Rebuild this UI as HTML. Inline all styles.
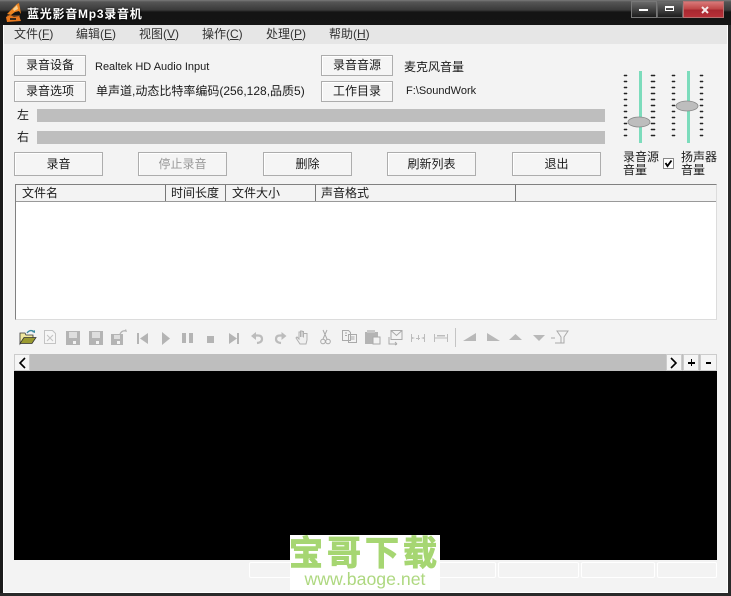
<!DOCTYPE html>
<html><head><meta charset="utf-8">
<style>
html,body{margin:0;padding:0;background:#f3f3f3}
#w{position:relative;width:731px;height:596px;overflow:hidden;background:#f3f3f3;font:12px/14px "Liberation Sans","WenQuanYi Zen Hei","Noto Sans CJK SC",sans-serif;color:#1a1a1a}
#w div{position:absolute;white-space:nowrap}
.b{box-sizing:border-box;background:#f5f5f5;border:1px solid #adadad;text-align:center;box-shadow:inset 1px 1px 0 #fff}
.t{line-height:14px}
.m{top:27px;color:#333}
u{text-decoration:underline}
.h{top:186px;height:15px;line-height:15px}
.g{box-sizing:border-box;top:562px;height:16px;border:1px solid #fff;border-radius:2px}
</style></head><body><div id="w">
<div style="left:0;top:0;width:731px;height:25px;background:linear-gradient(#7a7a7a 0,#555 2px,#3a3a3a 10px,#141414 12px,#151515 25px)"></div>
<div style="left:0;top:25px;width:3px;height:571px;background:#1c1c1c"></div>
<div style="left:3px;top:25px;width:1px;height:567px;background:#fff"></div>
<div style="left:728px;top:25px;width:3px;height:571px;background:#2a2a2a"></div>
<div style="left:727px;top:25px;width:1px;height:567px;background:#fff"></div>
<div style="left:0;top:593px;width:731px;height:3px;background:#2a2a2a"></div>
<div style="left:3px;top:592px;width:725px;height:1px;background:#fff"></div>
<svg style="position:absolute;left:4px;top:2px" width="19" height="21" viewBox="0 0 19 21"><path d="M3 12L9 6L13 2L15 1L16 6L17 12L15 9L11 10L7 13Z" fill="#ee8420"/><path d="M9 7L13 3L14 7L10 9Z" fill="#f8d090"/><path d="M3 13h13v6H3Z" fill="#5a3a20"/><path d="M2 15L6 13L10 15L15 14L17 19L3 20Z" fill="#e8781e"/><path d="M6 16h6v2H6Z" fill="#3a2a1a"/></svg>
<div class="t" style="left:27px;top:7px;color:#fff;font-weight:bold;font-size:12px;letter-spacing:.75px;font-family:'Liberation Sans','Noto Sans CJK SC',sans-serif;text-shadow:0 0 2px #000">蓝光影音Mp3录音机</div>
<div style="left:631px;top:1px;width:26px;height:17px;box-sizing:border-box;border:1px solid #777;background:linear-gradient(#6a6a6a,#444 50%,#1c1c1c)"></div>
<div style="left:639px;top:9px;width:9px;height:2px;background:#fff"></div>
<div style="left:657px;top:1px;width:26px;height:17px;box-sizing:border-box;border:1px solid #666;background:linear-gradient(#6a6a6a,#444 50%,#1c1c1c)"></div>
<div style="left:665px;top:6px;width:7px;height:2px;border:1px solid #fff;border-width:2px 1px 1px"></div>
<div style="left:683px;top:1px;width:41px;height:17px;box-sizing:border-box;border:1px solid #b87070;background:linear-gradient(#d87878,#c04848 45%,#a82830 55%,#b83038)"></div>
<svg style="position:absolute;left:699px;top:5px" width="12" height="11" viewBox="0 0 12 11"><path d="M3 2L9 8M9 2L3 8" stroke="#f4e8e8" stroke-width="2"/></svg>
<div style="left:4px;top:25px;width:723px;height:19px;background:#e6e6e6"></div>
<div class="t m" style="left:14px">文件(<u>F</u>)</div>
<div class="t m" style="left:76px">编辑(<u>E</u>)</div>
<div class="t m" style="left:139px">视图(<u>V</u>)</div>
<div class="t m" style="left:202px">操作(<u>C</u>)</div>
<div class="t m" style="left:266px">处理(<u>P</u>)</div>
<div class="t m" style="left:329px">帮助(<u>H</u>)</div>
<div class="b" style="left:14px;top:55px;width:72px;height:21px;line-height:18px">录音设备</div>
<div class="b" style="left:14px;top:81px;width:72px;height:21px;line-height:18px">录音选项</div>
<div class="b" style="left:321px;top:55px;width:72px;height:21px;line-height:18px">录音音源</div>
<div class="b" style="left:321px;top:81px;width:72px;height:21px;line-height:18px">工作目录</div>
<div class="t" style="left:95px;top:60px;font-size:11px">Realtek HD Audio Input</div>
<div class="t" style="left:96px;top:84px">单声道,动态比特率编码(256,128,品质5)</div>
<div class="t" style="left:404px;top:60px">麦克风音量</div>
<div class="t" style="left:406px;top:84px;font-size:11px">F:\SoundWork</div>
<div class="t" style="left:17px;top:108px">左</div>
<div class="t" style="left:17px;top:130px">右</div>
<div style="left:37px;top:109px;width:568px;height:13px;background:#bebebe"></div>
<div style="left:37px;top:131px;width:568px;height:13px;background:#bebebe"></div>
<div class="b" style="left:14px;top:152px;width:89px;height:24px;line-height:22px">录音</div>
<div class="b" style="left:138px;top:152px;width:89px;height:24px;line-height:22px;color:#999">停止录音</div>
<div class="b" style="left:263px;top:152px;width:89px;height:24px;line-height:22px">删除</div>
<div class="b" style="left:387px;top:152px;width:89px;height:24px;line-height:22px">刷新列表</div>
<div class="b" style="left:512px;top:152px;width:89px;height:24px;line-height:22px">退出</div>
<div style="left:15px;top:184px;width:702px;height:136px;box-sizing:border-box;background:#fff;border:1px solid #808080;border-right-color:#dcdcdc;border-bottom-color:#dcdcdc"></div>
<div style="left:16px;top:185px;width:700px;height:16px;background:#f3f3f3;border-bottom:1px solid #999"></div>
<div class="h" style="left:22px">文件名</div>
<div class="h" style="left:171px">时间长度</div>
<div class="h" style="left:232px">文件大小</div>
<div class="h" style="left:321px">声音格式</div>
<div style="left:165px;top:185px;width:1px;height:16px;background:#777"></div>
<div style="left:225px;top:185px;width:1px;height:16px;background:#777"></div>
<div style="left:315px;top:185px;width:1px;height:16px;background:#777"></div>
<div style="left:515px;top:185px;width:1px;height:16px;background:#777"></div>
<!-- sliders -->
<div style="left:639px;top:71px;width:3px;height:72px;background:#7cdcbc"></div>
<div style="left:687px;top:71px;width:3px;height:72px;background:#7cdcbc"></div>
<svg style="position:absolute;left:620px;top:70px" width="90" height="72" viewBox="0 0 90 72">
<g fill="#222" stroke="#222" stroke-width=".5"><path d="M4 5h3v1H4zM4 11h3v1H4zM4 17h3v1H4zM4 23h3v1H4zM4 29h3v1H4zM4 35h3v1H4zM4 41h3v1H4zM4 47h3v1H4zM4 53h3v1H4zM4 59h3v1H4zM4 65h3v1H4z"/><path d="M31 5h4v1h-4zM31 11h4v1h-4zM31 17h4v1h-4zM31 23h4v1h-4zM31 29h4v1h-4zM31 35h4v1h-4zM31 41h4v1h-4zM31 47h4v1h-4zM31 53h4v1h-4zM31 59h4v1h-4zM31 65h4v1h-4z"/><path d="M52 5h3v1h-3zM52 11h3v1h-3zM52 17h3v1h-3zM52 23h3v1h-3zM52 29h3v1h-3zM52 35h3v1h-3zM52 41h3v1h-3zM52 47h3v1h-3zM52 53h3v1h-3zM52 59h3v1h-3zM52 65h3v1h-3z"/><path d="M80 5h3v1h-3zM80 11h3v1h-3zM80 17h3v1h-3zM80 23h3v1h-3zM80 29h3v1h-3zM80 35h3v1h-3zM80 41h3v1h-3zM80 47h3v1h-3zM80 53h3v1h-3zM80 59h3v1h-3zM80 65h3v1h-3z"/></g>
<ellipse cx="19" cy="52" rx="11" ry="5" fill="#bdbdbd" stroke="#888" stroke-width=".8"/><ellipse cx="67" cy="36" rx="11" ry="5" fill="#bdbdbd" stroke="#888" stroke-width=".8"/></svg>
<div class="t" style="left:623px;top:151px;line-height:13px">录音源<br>音量</div>
<div class="t" style="left:681px;top:151px;line-height:13px">扬声器<br>音量</div>
<div style="left:663px;top:158px;width:11px;height:11px;box-sizing:border-box;border:1px solid #888;background:#fff"></div>
<svg style="position:absolute;left:664px;top:159px" width="9" height="9" viewBox="0 0 9 9"><path d="M1.500 4L3.500 7L7.500 1.500" stroke="#000" stroke-width="1.800" fill="none"/></svg>
<!-- toolbar -->
<svg style="position:absolute;left:18px;top:328px" width="560" height="20" viewBox="0 0 560 20">
<path d="M2 5h5l1 2h7v3H6l-4 6Z" fill="#f0e8a0" stroke="#333" stroke-width=".8"/><path d="M2 15.500l4-6h12l-4 6Z" fill="#9a9a30" stroke="#333" stroke-width=".8"/><path d="M9 5q3-4 7-1.500" stroke="#3a8aa0" stroke-width="1.300" fill="none"/><path d="M17 5l-3-1l3-2Z" fill="#3a8aa0"/>
<g fill="none" stroke="#c4c4c4"><path d="M26.500 2.500h8l3 3v10h-11Z" fill="#f6f6f6"/><path d="M29 7l6 6M35 7l-6 6"/></g>
<g fill="#b4b4b4"><path d="M48 3h14v14H48Z"/><path d="M71 3h14v14H71Z"/><path d="M93 6h12v11H93Z"/></g>
<g fill="#dedede"><path d="M51 4h8v6h-8zM74 4h8v6h-8zM96 7h6v4h-6z"/></g>
<g fill="#f3f3f3"><path d="M55 13h3v3h-3zM78 13h3v3h-3zM99 13h3v3h-3z"/></g>
<path d="M102 6q2-4 6-3" stroke="#b4b4b4" fill="none" stroke-width="1.300"/><path d="M109 4l-3-1l2-2Z" fill="#b4b4b4"/>
<g fill="#b4b4b4"><path d="M119 5h2v11h-2zM130 5v11l-8-5.500Z"/><path d="M144 4l8 6.500l-8 6.500Z"/><path d="M164 5h4v10h-4zM171 5h4v10h-4z"/><path d="M189 8h7v7h-7z"/><path d="M211 5l8 5.500l-8 5.500ZM219 5h2v11h-2z"/></g>
<g fill="none" stroke="#bcbcbc" stroke-width="2.200"><path d="M236 7.500h4q4 0 4 3.500t-5 4"/><path d="M266 7.500h-4q-4 0-4 3.500t5 4"/></g><path d="M233 8l5-4v8ZM268.500 8l-5-4v8Z" fill="#bcbcbc"/>
<path d="M282 16l-4-6l1-1l2 2V4h1.500v5V3h1.500v6V3.500h1.500v6V5.500H289V12l-1 4Z" fill="#f0f0f0" stroke="#b0b0b0"/>
<g fill="none" stroke="#aaa"><path d="M305 2l4 9M309 2l-4 9"/><circle cx="305" cy="13.500" r="2.300"/><circle cx="310" cy="13.500" r="2.300"/><path d="M324.500 2.500h6l2 2v8h-8ZM330.500 6.500h8v8h-8Z" fill="#f3f3f3"/><path d="M332.500 9h4M332.500 11h4M327 5h2M327 7.500h2"/></g>
<path d="M347 4h13v12h-13Z" fill="#b4b4b4"/><path d="M349 2h8v3h-8Z" fill="#c8c8c8"/><path d="M355 9h7v7h-7Z" fill="#f3f3f3" stroke="#aaa"/>
<g fill="none" stroke="#aaa"><path d="M373 2.500h11v9h-11ZM373 2.500l5.500 5l5.500-5M371 9v7h8M379 16l-2-2M379 16l-2 1"/></g>
<g fill="#bcbcbc"><path d="M393 6h1v8h-1zM406 6h1v8h-1zM394 9l3 1l-3 1ZM406 9l-3 1l3 1ZM398 10h4v1h-4zM400 7h1v5h-1z"/><path d="M416 6h1v8h-1zM429 6h1v8h-1zM417 9.500h12v1h-12zM419 7h8v1.500h-8z"/></g>
<path d="M437.500 0v19" stroke="#c4c4c4"/>
<g fill="#b8b8b8"><path d="M445 13L458 5v8Z"/><path d="M469 5l13 8h-13Z"/><path d="M491 12l6.500-6l6.500 6Z"/><path d="M515 7h12l-6 6Z"/></g>
<path d="M539 3h11l-4 6v6h-3V9ZM537 10h-4M537 15h7" stroke="#aaa" fill="none"/>
</svg>
<!-- strip -->
<div style="left:14px;top:354px;width:703px;height:17px;background:#bebebe"></div>
<div style="left:14px;top:354px;width:16px;height:17px;background:#f5f5f5;box-sizing:border-box;border:1px solid #ccc"></div>
<svg style="position:absolute;left:18px;top:357px" width="9" height="12" viewBox="0 0 9 12"><path d="M7 1L2 6L7 11" stroke="#000" stroke-width="1.600" fill="none"/></svg>
<div style="left:666px;top:354px;width:16px;height:17px;background:#f5f5f5;box-sizing:border-box;border:1px solid #ccc"></div>
<svg style="position:absolute;left:669px;top:357px" width="9" height="12" viewBox="0 0 9 12"><path d="M2 1L7 6L2 11" stroke="#000" stroke-width="1.600" fill="none"/></svg>
<div style="left:683px;top:354px;width:16px;height:17px;background:#f5f5f5;box-sizing:border-box;border:1px solid #ccc"></div>
<div style="left:688px;top:362px;width:7px;height:1.500px;background:#000"></div><div style="left:690.500px;top:359px;width:1.500px;height:7px;background:#000"></div>
<div style="left:700px;top:354px;width:17px;height:17px;background:#f5f5f5;box-sizing:border-box;border:1px solid #ccc"></div>
<div style="left:706px;top:362px;width:5px;height:1.500px;background:#000"></div>
<div style="left:14px;top:371px;width:703px;height:189px;background:#000"></div>
<div class="g" style="left:249px;width:82px"></div>
<div class="g" style="left:415px;width:81px"></div>
<div class="g" style="left:498px;width:81px"></div>
<div class="g" style="left:581px;width:74px"></div>
<div class="g" style="left:657px;width:60px"></div>
<!-- watermark -->
<div style="left:290px;top:535px;width:150px;height:55px;background:#fff"></div>
<div style="left:289px;top:534px;font:bold 34px/34px 'Noto Sans CJK SC',sans-serif;color:#a6d672;letter-spacing:4px;-webkit-text-stroke:1px #a6d672">宝哥下载</div>
<div style="left:290px;top:570px;width:150px;text-align:center;font:17.700px/18px 'Liberation Sans',sans-serif;color:#aed880">www.baoge.net</div>
</div></body></html>
